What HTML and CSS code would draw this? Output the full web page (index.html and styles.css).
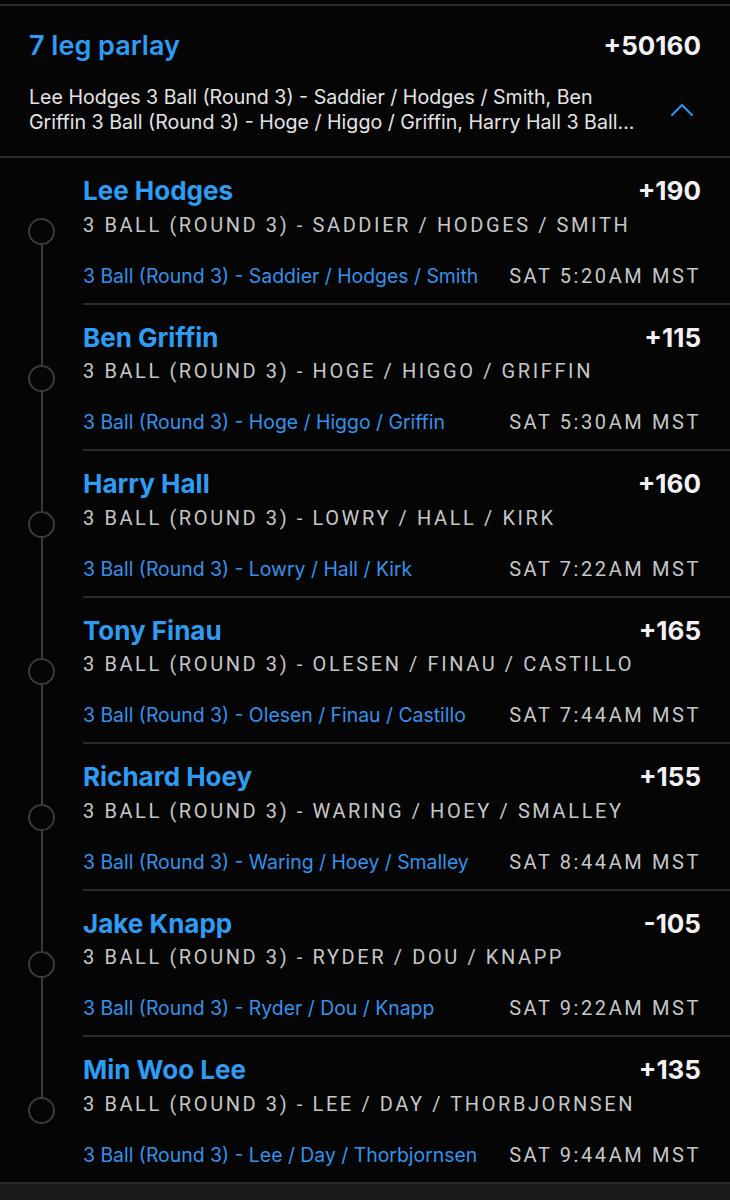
FILE: index.html
```html
<!DOCTYPE html>
<html lang="en">
<head>
  <meta charset="UTF-8">
  <meta name="viewport" content="width=device-width, initial-scale=1.0">
  <title>7 leg parlay</title>
  <link rel="stylesheet" href="styles.css">
</head>
<body>
<div class="parlay">
  <header class="parlay-head">
    <div class="head-top">
      <h1>7 leg parlay</h1>
      <span class="total">+50160</span>
    </div>
    <div class="head-desc">
      <p>Lee Hodges 3 Ball (Round 3) - Saddier / Hodges / Smith, Ben Griffin 3 Ball (Round 3) - Hoge / Higgo / Griffin, Harry Hall 3 Ball (Round 3) - Lowry / Hall / Kirk, Tony Finau 3 Ball (Round 3) - Olesen / Finau / Castillo</p>
      <svg class="chevron" width="24" height="14" viewBox="0 0 24 14"><path d="M2 12 L12 2 L22 12" fill="none" stroke="#2f8fe6" stroke-width="2.2" stroke-linecap="round" stroke-linejoin="round"/></svg>
    </div>
  </header>

  <ul class="legs">
    <li class="leg first">
      <div class="rail"><span class="seg top"></span><span class="dot"></span><span class="seg bottom"></span></div>
      <div class="leg-body">
        <div class="leg-top"><span class="name">Lee Hodges</span><span class="odds">+190</span></div>
        <div class="market">3 Ball (Round 3) - Saddier / Hodges / Smith</div>
        <div class="leg-foot"><span class="event">3 Ball (Round 3) - Saddier / Hodges / Smith</span><span class="time">Sat 5:20AM MST</span></div>
      </div>
    </li>
    <li class="leg">
      <div class="rail"><span class="seg top"></span><span class="dot"></span><span class="seg bottom"></span></div>
      <div class="leg-body">
        <div class="leg-top"><span class="name">Ben Griffin</span><span class="odds">+115</span></div>
        <div class="market">3 Ball (Round 3) - Hoge / Higgo / Griffin</div>
        <div class="leg-foot"><span class="event">3 Ball (Round 3) - Hoge / Higgo / Griffin</span><span class="time">Sat 5:30AM MST</span></div>
      </div>
    </li>
    <li class="leg">
      <div class="rail"><span class="seg top"></span><span class="dot"></span><span class="seg bottom"></span></div>
      <div class="leg-body">
        <div class="leg-top"><span class="name">Harry Hall</span><span class="odds">+160</span></div>
        <div class="market">3 Ball (Round 3) - Lowry / Hall / Kirk</div>
        <div class="leg-foot"><span class="event">3 Ball (Round 3) - Lowry / Hall / Kirk</span><span class="time">Sat 7:22AM MST</span></div>
      </div>
    </li>
    <li class="leg">
      <div class="rail"><span class="seg top"></span><span class="dot"></span><span class="seg bottom"></span></div>
      <div class="leg-body">
        <div class="leg-top"><span class="name">Tony Finau</span><span class="odds">+165</span></div>
        <div class="market">3 Ball (Round 3) - Olesen / Finau / Castillo</div>
        <div class="leg-foot"><span class="event">3 Ball (Round 3) - Olesen / Finau / Castillo</span><span class="time">Sat 7:44AM MST</span></div>
      </div>
    </li>
    <li class="leg">
      <div class="rail"><span class="seg top"></span><span class="dot"></span><span class="seg bottom"></span></div>
      <div class="leg-body">
        <div class="leg-top"><span class="name">Richard Hoey</span><span class="odds">+155</span></div>
        <div class="market">3 Ball (Round 3) - Waring / Hoey / Smalley</div>
        <div class="leg-foot"><span class="event">3 Ball (Round 3) - Waring / Hoey / Smalley</span><span class="time">Sat 8:44AM MST</span></div>
      </div>
    </li>
    <li class="leg">
      <div class="rail"><span class="seg top"></span><span class="dot"></span><span class="seg bottom"></span></div>
      <div class="leg-body">
        <div class="leg-top"><span class="name">Jake Knapp</span><span class="odds">-105</span></div>
        <div class="market">3 Ball (Round 3) - Ryder / Dou / Knapp</div>
        <div class="leg-foot"><span class="event">3 Ball (Round 3) - Ryder / Dou / Knapp</span><span class="time">Sat 9:22AM MST</span></div>
      </div>
    </li>
    <li class="leg last">
      <div class="rail"><span class="seg top"></span><span class="dot"></span><span class="seg bottom"></span></div>
      <div class="leg-body">
        <div class="leg-top"><span class="name">Min Woo Lee</span><span class="odds">+135</span></div>
        <div class="market">3 Ball (Round 3) - Lee / Day / Thorbjornsen</div>
        <div class="leg-foot"><span class="event">3 Ball (Round 3) - Lee / Day / Thorbjornsen</span><span class="time">Sat 9:44AM MST</span></div>
      </div>
    </li>
  </ul>
</div>
<div class="below"></div>
</body>
</html>
```

FILE: styles.css
```css
html {
  background-color: #050506;
}
body {
  margin: 0;
  padding-top: 4px;
  font-family: Inter, Lato, "Liberation Sans", sans-serif;
  background-color: #050506;
  color: #e6e6e8;
}
.parlay {
  border-top: 2px solid #2a2a2d;
  border-bottom: 2px solid #2a2a2d;
}

/* header */
.parlay-head {
  padding: 24px 29px 21px 29px;
  border-bottom: 2px solid #2a2a2d;
}
.head-top {
  display: flex;
  justify-content: space-between;
  align-items: center;
  height: 31px;
}
h1 {
  margin: 0;
  font-size: 27px;
  line-height: 31px;
  font-weight: 600;
  color: #2e9cf3;
}
.total {
  font-size: 26px;
  line-height: 31px;
  font-weight: 700;
  color: #f2f2f4;
}
.head-desc {
  display: flex;
  justify-content: space-between;
  align-items: center;
  margin-top: 24px;
}
.head-desc p {
  margin: 0;
  width: 622px;
  font-size: 19.6px;
  line-height: 25px;
  color: #e4e4e6;
  display: -webkit-box;
  -webkit-line-clamp: 2;
  -webkit-box-orient: vertical;
  overflow: hidden;
}
.chevron {
  margin-right: 7px;
}

/* legs */
.legs {
  list-style: none;
  margin: 0;
  padding: 0;
}
.leg {
  display: flex;
}
.rail {
  width: 83px;
  flex: none;
  display: flex;
  flex-direction: column;
  align-items: center;
}
.seg {
  width: 2px;
  background-color: #3a3a3d;
}
.seg.top {
  height: 60px;
}
.seg.bottom {
  flex: 1;
}
.first .seg.top,
.last .seg.bottom {
  background-color: transparent;
}
.dot {
  width: 23px;
  height: 23px;
  border: 2px solid #3a3a3d;
  border-radius: 50%;
  flex: none;
}
.leg-body {
  flex: 1;
  padding: 18px 29px 13px 0;
  border-bottom: 2px solid #2a2a2d;
}
.last .leg-body {
  border-bottom: none;
}
.leg-top {
  display: flex;
  justify-content: space-between;
  align-items: center;
  height: 30px;
}
.name {
  font-size: 26px;
  line-height: 30px;
  font-weight: 700;
  color: #2e9cf3;
}
.odds {
  font-size: 26px;
  line-height: 30px;
  font-weight: 700;
  color: #f2f2f4;
}
.market {
  margin-top: 4.5px;
  height: 28px;
  line-height: 28px;
  font-family: Roboto, "Liberation Sans", sans-serif;
  font-size: 20px;
  letter-spacing: 2.6px;
  text-transform: uppercase;
  color: #c6c6c9;
}
.leg-foot {
  display: flex;
  justify-content: space-between;
  align-items: center;
  margin-top: 23px;
  height: 28px;
}
.event {
  font-size: 19.4px;
  line-height: 28px;
  color: #3592ea;
}
.time {
  font-family: Roboto, "Liberation Sans", sans-serif;
  font-size: 20px;
  line-height: 28px;
  letter-spacing: 2.6px;
  text-transform: uppercase;
  color: #c6c6c9;
}
.below {
  height: 40px;
  background-color: #1a1a1c;
}
```
